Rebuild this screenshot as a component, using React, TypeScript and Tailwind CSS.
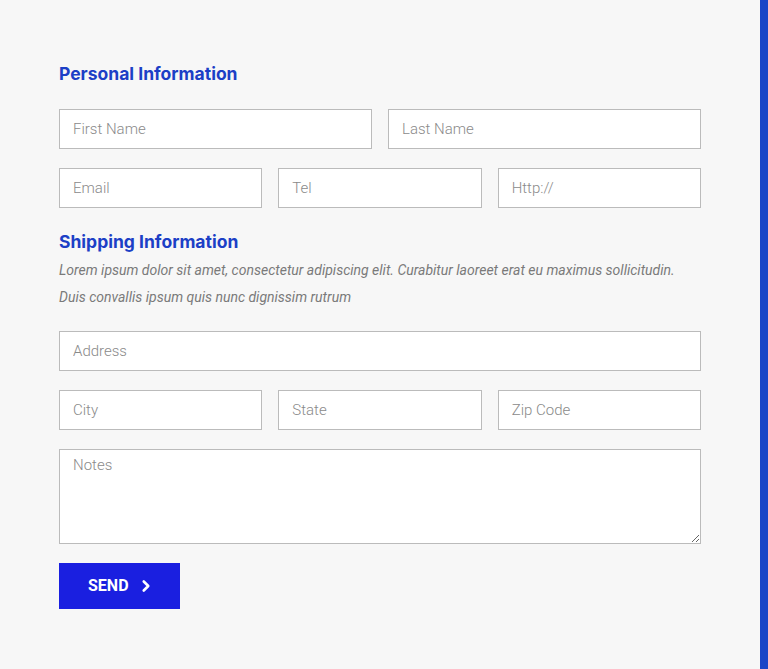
import React from 'react';
import { ChevronRight } from 'lucide-react';

const inputCls =
  'h-10 w-full border border-[#bbbbbb] bg-white px-[13px] text-[15px] font-light text-[#444] placeholder:text-[#8a8a8a] outline-none';

const headingCls = "text-[17.5px] leading-6 font-bold text-[#1c3fc6] font-['Inter',sans-serif]";

export default function App() {
  return (
    <div className="flex h-[669px] w-full bg-[#f7f7f7] font-['Roboto',sans-serif]">
      <div className="flex-1 pl-[59px] pt-[62px]">
        <form className="w-[642px]" onSubmit={(e) => e.preventDefault()}>
          {/* Personal */}
          <h2 className={headingCls}>Personal Information</h2>
          <div className="mt-[23px] flex flex-col gap-[19px]">
            <div className="grid grid-cols-2 gap-4">
              <input className={inputCls} placeholder="First Name" />
              <input className={inputCls} placeholder="Last Name" />
            </div>
            <div className="grid grid-cols-3 gap-4">
              <input className={inputCls} placeholder="Email" />
              <input className={inputCls} placeholder="Tel" />
              <input className={inputCls} placeholder="Http://" />
            </div>
          </div>

          {/* Shipping */}
          <h2 className={`mt-[22px] ${headingCls}`}>Shipping Information</h2>
          <p className="mt-[3px] text-[14px] leading-[27px] italic text-[#7a7a7a]">
            Lorem ipsum dolor sit amet, consectetur adipiscing elit. Curabitur laoreet erat eu maximus sollicitudin.
            <br />
            Duis convallis ipsum quis nunc dignissim rutrum
          </p>
          <div className="mt-[20px] flex flex-col gap-[19px]">
            <input className={inputCls} placeholder="Address" />
            <div className="grid grid-cols-3 gap-4">
              <input className={inputCls} placeholder="City" />
              <input className={inputCls} placeholder="State" />
              <input className={inputCls} placeholder="Zip Code" />
            </div>
            <textarea
              className="h-[95px] w-full border border-[#bbbbbb] bg-white px-[13px] py-[4px] text-[15px] font-light text-[#444] placeholder:text-[#8a8a8a] outline-none"
              placeholder="Notes"
            />
            <button
              type="submit"
              className="flex h-[46px] w-[121px] items-center gap-[8px] bg-[#1a1fe0] pl-[29px] text-[16px] font-bold text-white"
            >
              SEND
              <ChevronRight size={18} strokeWidth={3.5} />
            </button>
          </div>
        </form>
      </div>
      <div className="w-2 bg-[#1a45c7]" />
    </div>
  );
}
